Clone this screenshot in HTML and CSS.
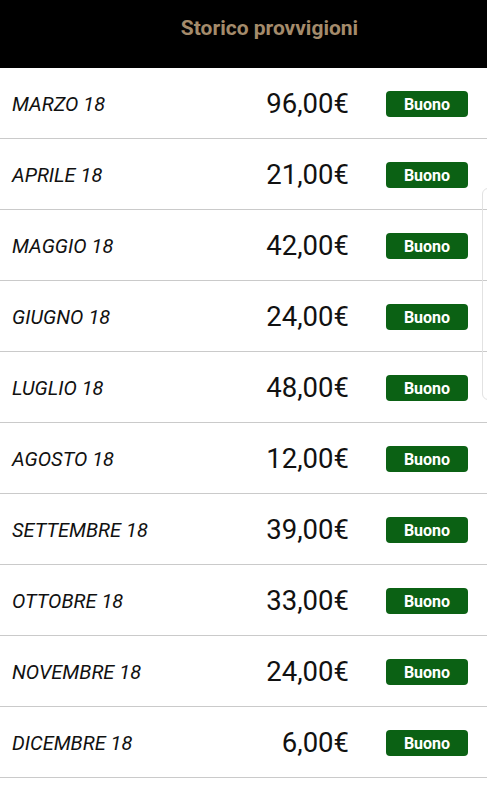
FILE: index.html
```html
<!DOCTYPE html>
<html>

<head>
    <title>Storico provvigioni</title>
    <link rel="stylesheet" href="styles.css">
</head>

<body>
    <div class="top-bar">
        <h1>Storico provvigioni</h1>
    </div>

    <ul class="month-list">
        <li class="month-item">
            <span class="month-name">MARZO 18</span>
            <span class="month-amount">96,00€</span>
            <span class="badge">Buono</span>
        </li>
        <li class="month-item">
            <span class="month-name">APRILE 18</span>
            <span class="month-amount">21,00€</span>
            <span class="badge">Buono</span>
        </li>
        <li class="month-item">
            <span class="month-name">MAGGIO 18</span>
            <span class="month-amount">42,00€</span>
            <span class="badge">Buono</span>
        </li>
        <li class="month-item">
            <span class="month-name">GIUGNO 18</span>
            <span class="month-amount">24,00€</span>
            <span class="badge">Buono</span>
        </li>
        <li class="month-item">
            <span class="month-name">LUGLIO 18</span>
            <span class="month-amount">48,00€</span>
            <span class="badge">Buono</span>
        </li>
        <li class="month-item">
            <span class="month-name">AGOSTO 18</span>
            <span class="month-amount">12,00€</span>
            <span class="badge">Buono</span>
        </li>
        <li class="month-item">
            <span class="month-name">SETTEMBRE 18</span>
            <span class="month-amount">39,00€</span>
            <span class="badge">Buono</span>
        </li>
        <li class="month-item">
            <span class="month-name">OTTOBRE 18</span>
            <span class="month-amount">33,00€</span>
            <span class="badge">Buono</span>
        </li>
        <li class="month-item">
            <span class="month-name">NOVEMBRE 18</span>
            <span class="month-amount">24,00€</span>
            <span class="badge">Buono</span>
        </li>
        <li class="month-item">
            <span class="month-name">DICEMBRE 18</span>
            <span class="month-amount">6,00€</span>
            <span class="badge">Buono</span>
        </li>
    </ul>

    <!-- indicatore di scorrimento -->
    <div class="scroll-hint"></div>
</body>

</html>
```

FILE: styles.css
```css
body {
    font-family: Roboto, "Liberation Sans", sans-serif;
    background-color: #fff;
    color: #111;
    margin: 0;
    padding: 0;
}

/* Barra superiore */
.top-bar {
    background-color: #000;
    height: 68px;
    display: flex;
    align-items: center;
    justify-content: center;
    padding-left: 52px;
}

.top-bar h1 {
    margin: 0 0 12px 0;
    font-size: 21px;
    font-weight: 700;
    color: #a48b6b;
}

/* Lista dei mesi */
.month-list {
    list-style: none;
    margin: 0;
    padding: 0;
}

.month-item {
    box-sizing: border-box;
    display: grid;
    grid-template-columns: 1fr auto auto;
    align-items: center;
    column-gap: 37px;
    height: 71px;
    padding: 1px 19px 0 12px;
    border-bottom: 1px solid #cacaca;
}

.month-name {
    font-size: 20px;
    font-style: italic;
}

.month-amount {
    font-size: 27.5px;
    text-align: right;
}

.badge {
    background-color: #0b6114;
    color: #fff;
    font-size: 16px;
    font-weight: 700;
    width: 82px;
    height: 26px;
    line-height: 28px;
    text-align: center;
    border-radius: 4px;
}

.scroll-hint {
    position: absolute;
    top: 188px;
    left: 482px;
    width: 12px;
    height: 210px;
    border: 1px solid #e2e2e2;
    border-radius: 6px;
}
```
